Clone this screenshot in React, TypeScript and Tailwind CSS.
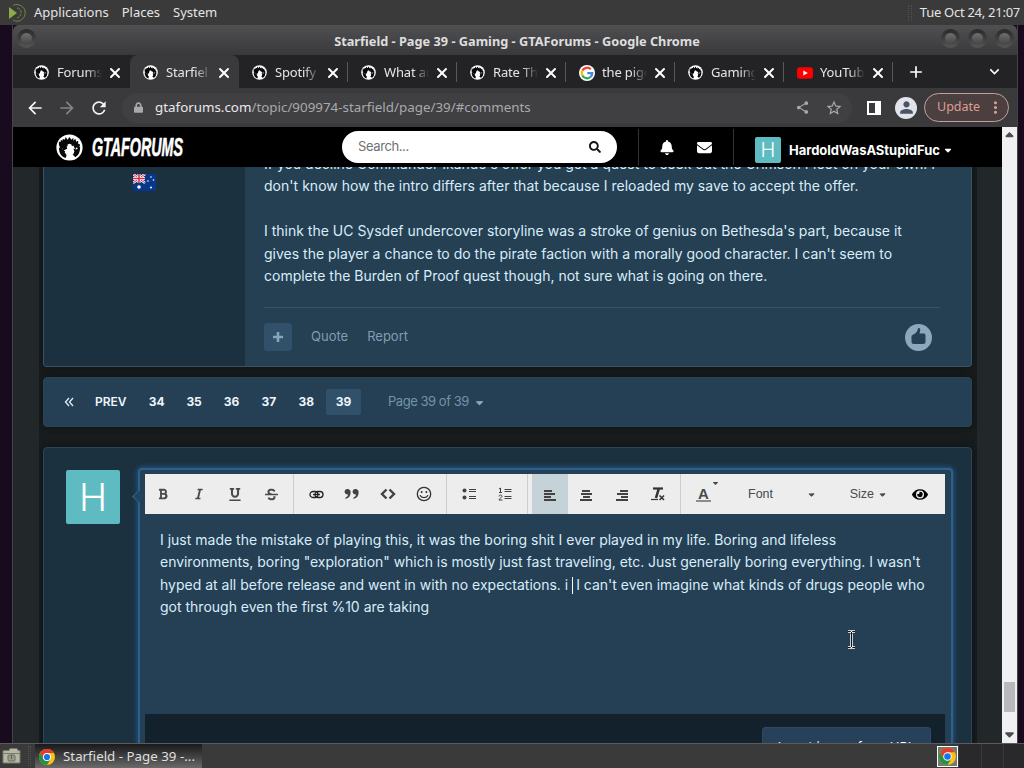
import React from "react";
import { X } from "lucide-react";
import { FaBell, FaBold, FaEye, FaItalic, FaLock, FaSearch, FaStrikethrough, FaUnderline } from "react-icons/fa";
import { FaCaretDown, FaCaretUp, FaEnvelope } from "react-icons/fa6";
import {
  MdArrowBack,
  MdArrowForward,
  MdExpandMore,
  MdAdd,
  MdMoreVert,
  MdPerson,
  MdRefresh,
  MdShare,
  MdStarBorder,
} from "react-icons/md";

interface TabData {
  title: string;
  icon: "gta" | "google" | "youtube";
  active?: boolean;
  divider?: boolean;
}

const tabs: TabData[] = [
  { title: "Forums", icon: "gta" },
  { title: "Starfiel", icon: "gta", active: true },
  { title: "Spotify t", icon: "gta", divider: true },
  { title: "What ar", icon: "gta", divider: true },
  { title: "Rate Th", icon: "gta", divider: true },
  { title: "the pige", icon: "google", divider: true },
  { title: "Gaming", icon: "gta", divider: true },
  { title: "YouTub", icon: "youtube", divider: true },
];

const postLines = [
  "If you decline Commander Ikande's offer you get a quest to seek out the Crimson Fleet on your own. I",
  "don't know how the intro differs after that because I reloaded my save to accept the offer.",
  "",
  "I think the UC Sysdef undercover storyline was a stroke of genius on Bethesda's part, because it",
  "gives the player a chance to do the pirate faction with a morally good character. I can't seem to",
  "complete the Burden of Proof quest though, not sure what is going on there.",
];

const pages = ["34", "35", "36", "37", "38", "39"];

const GtaMark = ({ size }: { size: number }) => (
  <svg width={size} height={size} viewBox="0 0 28 28" className="shrink-0">
    <circle cx="14" cy="14" r="13.6" fill="#fff" />
    <path
      d="M3 11V8h2V6l2 1V5l2 1 1-3 2 3 2-3 2 3 2-2v3l2-2 1 3 2-1v3l2 1-1 4-3-1-1 2-2-4-2 1-2-1-3 1 1 3-2 1-3-2-2 3-1-4z"
      fill="#08090a"
    />
    <path
      d="M3 14l3 2 4-2 1 2-2 3 2 3-1 3c-4-1-7-5-7-11zM18 15l3 1 4-3c0 5-1 9-5 11l-3-3 2-3z"
      fill="#08090a"
    />
    <path d="M12 11l2-1 2 1 1 3-2 1 4 3-1 3-3 1-4-3-3-2 4-2z" fill="#fff" />
  </svg>
);

const GoogleMark = () => (
  <svg width="16" height="16" viewBox="0 0 16 16" className="shrink-0">
    <circle cx="8" cy="8" r="8" fill="#fff" />
    <g fill="none" strokeWidth="2.3">
      <path d="M11.8 4.3A5.2 5.2 0 0 0 3.4 5.6" stroke="#ea4335" />
      <path d="M3.4 5.6a5.2 5.2 0 0 0 0 4.9" stroke="#fbbc05" />
      <path d="M3.4 10.5a5.2 5.2 0 0 0 8 1.5" stroke="#34a853" />
      <path d="M11.4 12A5.2 5.2 0 0 0 13.2 8.2H8.3" stroke="#4285f4" />
    </g>
  </svg>
);

const YoutubeMark = () => (
  <svg width="16" height="16" viewBox="0 0 16 16" className="shrink-0">
    <rect y="2.2" width="16" height="11.6" rx="3" fill="#f00" />
    <path d="M6.3 5.4v5.2L10.8 8z" fill="#fff" />
  </svg>
);

const ChromeMark = ({ size }: { size: number }) => (
  <svg width={size} height={size} viewBox="0 0 16 16" className="shrink-0">
    <circle cx="8" cy="8" r="8" fill="#fbc116" />
    <path d="M1.07 4A8 8 0 0 1 14.93 4H8v4L4.5 10z" fill="#e33b2e" />
    <path d="M1.07 4A8 8 0 0 0 8 16l3.5-6L8 8l-3.5 2z" fill="#229342" />
    <circle cx="8" cy="8" r="4" fill="#fff" />
    <circle cx="8" cy="8" r="3.1" fill="#1a73e8" />
  </svg>
);

const WindowButton = () => (
  <span className="w-[19px] h-[19px] rounded-full bg-linear-to-b from-[#292929] to-[#565656] flex items-center justify-center">
    <span className="w-[11px] h-[11px] rounded-full bg-linear-to-b from-[#707070] to-[#464646]" />
  </span>
);

const TopPanel = () => (
  <div className="h-[25px] shrink-0 bg-[#3a3a3b] flex items-center text-[13px] text-[#e4e4e4] pl-[7px] pr-1">
    <svg width="21" height="20" viewBox="0 0 21 20">
      <path d="M2 4l8 6-8 6z" fill="#8dab45" />
      <g fill="none" stroke="#6f8a49">
        <path d="M6 2.500c3-2 8-1 11 3 3 5 0 11-5 12.500-3 .5-4 0-6-1" />
        <path d="M10 5c5 0 6 8 0 10" strokeDasharray="3 1" />
      </g>
    </svg>
    <span className="ml-[6px]">Applications</span>
    <span className="ml-[13px]">Places</span>
    <span className="ml-[13px]">System</span>
    <span className="ml-auto mr-[8px] w-1 h-4 border-x border-dotted border-[#525252]" />
    <span className="tracking-[-0.27px]">Tue Oct 24, 21:07</span>
  </div>
);

const TitleBar = () => (
  <div className="h-[30px] shrink-0 flex items-start pt-[4px] pl-[4px] pr-[3px] rounded-t-md bg-linear-to-b from-[#505052] to-[#39393b]">
    <WindowButton />
    <span className="flex-1 pl-[57px] text-center text-[12.75px] leading-[24px] font-bold text-[#dedede] whitespace-nowrap">
      Starfield - Page 39 - Gaming - GTAForums - Google Chrome
    </span>
    <div className="flex gap-[8px]">
      <WindowButton />
      <WindowButton />
      <WindowButton />
    </div>
  </div>
);

const Tab = ({ tab }: { tab: TabData }) => (
  <div
    className={`w-[109px] h-[33px] shrink-0 flex items-center pt-[2px] pl-[13px] relative ${
      tab.active ? "bg-[#3a3a3c] rounded-t-lg" : ""
    }`}
  >
    {tab.icon === "gta" && <GtaMark size={15} />}
    {tab.icon === "google" && <GoogleMark />}
    {tab.icon === "youtube" && <YoutubeMark />}
    <span
      className={`w-[45px] overflow-hidden whitespace-nowrap text-[13px] tracking-[-0.15px] mask-r-from-65% mask-r-to-100% text-[#e5e5e7] ${
        tab.icon === "gta" ? "ml-[8px]" : "ml-[7px]"
      }`}
    >
      {tab.title}
    </span>
    <X className="ml-[5px] w-[16px] h-[16px] shrink-0 text-white" strokeWidth={3} />
    {tab.divider && <span className="absolute right-0 top-[7px] w-px h-5 bg-[#58585a]" />}
  </div>
);

const BrowserToolbar = () => (
  <div className="h-[39px] shrink-0 bg-[#3a3a3c] flex items-center pl-[12px] pr-[8px] text-[#f3f3f4]">
    <MdArrowBack className="w-5 h-5" />
    <MdArrowForward className="ml-[12px] w-5 h-5 text-[#848487]" />
    <MdRefresh className="ml-[12px] w-5 h-5" />
    <div className="ml-[13px] w-[730px] h-[30px] rounded-full bg-[#404043] flex items-center pl-[12px] pr-[9px] text-[#a9a9ad]">
      <FaLock className="w-[9px] h-[11px]" />
      <span className="ml-[12px] text-[13.36px] whitespace-nowrap">
        <span className="text-[#e9e9ea]">gtaforums.com</span>/topic/909974-starfield/page/39/#comments
      </span>
      <MdShare className="ml-auto w-[15px] h-[15px]" />
      <MdStarBorder className="ml-[15px] w-[18px] h-[18px]" />
    </div>
    <span className="ml-[15px] w-[14px] h-[14px] border-2 border-r-[6px] border-white" />
    <span className="ml-[14px] w-[22px] h-[22px] rounded-full bg-[#e2e4ea] flex items-center justify-center">
      <MdPerson className="w-[19px] h-[19px] text-[#4b5467]" />
    </span>
    <div className="ml-auto w-[85px] h-[29px] rounded-full border border-[#c4a09c] bg-[#4b3f40] text-[#dc9d94] flex items-center pl-[12px] text-[12.5px]">
      Update
      <MdMoreVert className="ml-[6px] w-[19px] h-[19px] shrink-0" />
    </div>
  </div>
);

const SiteHeader = () => (
  <div className="h-10 shrink-0 bg-black flex items-center pl-[43px] text-white">
    <GtaMark size={27} />
    <svg width="93" height="26" viewBox="0 0 93 26" className="ml-[8px]">
      <text
        x="1"
        y="22"
        fill="#fff"
        stroke="#fff"
        strokeWidth="0.6"
        fontFamily="Liberation Sans"
        fontStyle="italic"
        fontWeight="700"
        fontSize="26"
        textLength="91"
        lengthAdjust="spacingAndGlyphs"
      >
        GTAFORUMS
      </text>
    </svg>
    <div className="ml-[158px] w-[275px] h-8 rounded-full bg-white flex items-center pl-4 pr-[16px] text-[13px] tracking-[-0.4px] text-[#707070]">
      Search...
      <FaSearch className="ml-auto w-[12px] h-[12px] text-[#161616]" />
    </div>
    <span className="ml-[21px] w-px h-9 bg-[#333]" />
    <FaBell className="ml-[21px] w-[14px] h-[15px]" />
    <FaEnvelope className="ml-[23px] w-[15px] h-[15px]" />
    <span className="ml-[21px] w-px h-9 bg-[#333]" />
    <span className="ml-[21px] mt-[6px] w-[26px] h-[26px] rounded-[2px] bg-[#5dbbc1] text-[20px] leading-[26px] font-light text-center">
      H
    </span>
    <span className="ml-[8px] mt-[7px] text-[13px] tracking-[-0.03px] font-bold whitespace-nowrap">
      HardoldWasAStupidFuc
    </span>
    <FaCaretDown className="ml-[4px] mt-[6px] w-[8px] h-[10px]" />
  </div>
);

const AustraliaFlag = () => (
  <svg width="23" height="17" viewBox="0 0 23 17" className="mt-[7px] ml-[89px]">
    <rect width="23" height="17" rx="1" fill="#07378b" />
    <path d="M0 0l12 9M12 0L0 9" stroke="#fff" strokeWidth="2.5" />
    <path d="M0 0l12 9M12 0L0 9" stroke="#d42d45" />
    <path d="M6 0v9M0 4.500h12" stroke="#fff" strokeWidth="3" />
    <path d="M6 0v9M0 4.500h12" stroke="#d42d45" strokeWidth="1.6" />
    <circle cx="6" cy="13" r="1.8" fill="#fff" />
    <circle cx="18" cy="3" r=".8" fill="#fff" />
    <circle cx="15" cy="7" r=".8" fill="#fff" />
    <circle cx="20.500" cy="6" r=".8" fill="#fff" />
    <circle cx="18" cy="13.500" r="1" fill="#fff" />
  </svg>
);

const Post = () => (
  <div className="h-[200px] shrink-0 flex border border-t-0 border-[#3a5262] rounded-b overflow-hidden bg-[#253f53] shadow-[0_0_6px_#0c1216]">
    <div className="w-[201px] shrink-0 bg-[#1c313f]">
      <AustraliaFlag />
    </div>
    <div className="flex-1 pl-[19px] pr-[31px]">
      <div className="mt-[-14px] h-[153px] text-[14px] leading-[22.4px] text-[#d8edf9] whitespace-nowrap">
        {postLines.map((line, i) => (
          <div key={i} className={`h-[22.4px] ${i === 1 ? "tracking-[0.03px]" : ""}`}>
            {line}
          </div>
        ))}
      </div>
      <div className="mt-[1px] border-t border-[#395267] pt-[15px] flex items-center text-[13px] text-[#7f9eb3]">
        <span className="w-[28px] h-[28px] rounded-[3px] bg-[#305169] flex items-center justify-center">
          <svg width="10" height="10" viewBox="0 0 10 10" stroke="#86a6ba" strokeWidth="2.6">
            <path d="M5 0v10M0 5h10" />
          </svg>
        </span>
        <span className="ml-[19px]">Quote</span>
        <span className="ml-[19px]">Report</span>
        <span className="ml-auto mr-[8px] w-[27px] h-[27px] rounded-full bg-[#8ca8bd] flex items-center justify-center">
          <svg width="17" height="18" viewBox="0 0 17 18" className="mt-[-3px]">
            <path
              d="M1.500 9.500c0-1 .5-1.500 1.500-1.800C6 6.500 7.500 4.500 7.800 2.300c.2-1.300 1-1.500 1.800-1 1.200.8.6 3-.1 5.200h4c1.300 0 2 .7 2 1.600v7c0 1.200-1 1.900-2.300 1.900H4c-1.500 0-2.500-.8-2.500-2z"
              fill="#263f53"
            />
          </svg>
        </span>
      </div>
    </div>
  </div>
);

const Pagination = () => (
  <div className="mt-[10px] h-[50px] shrink-0 rounded border border-[#2b4453] bg-[#253f54] flex items-center pl-[20px] text-[12px] font-bold text-[#edf6fc] shadow-[0_0_6px_#0c1216]">
    <svg width="10" height="10" viewBox="0 0 10 10" fill="none" stroke="#d9e8f2" strokeWidth="1.400">
      <path d="M5 1L1.500 5 5 9M9 1L5.500 5 9 9" />
    </svg>
    <span className="ml-[21px] w-[43px] font-semibold">PREV</span>
    {pages.map((page) => (
      <span
        key={page}
        className={`h-[26px] flex items-center justify-center rounded-[2px] ${
          page === "39" ? "w-[35px] ml-[1px] bg-[#305169]" : "w-[37.400px]"
        }`}
      >
        {page}
      </span>
    ))}
    <span className="ml-[27px] text-[13px] tracking-[-0.46px] font-normal text-[#7393a8]">Page 39 of 39</span>
    <FaCaretDown className="ml-[6px] w-[9px] h-[11px] text-[#8ba8ba]" />
  </div>
);

const ToolButton = ({ children, active }: { children: React.ReactNode; active?: boolean }) => (
  <span className={`w-9 h-10 flex items-center justify-center ${active ? "bg-[#c5d2d8]" : ""}`}>{children}</span>
);

const LinkIcon = () => (
  <svg width="15" height="9" viewBox="0 0 15 9" fill="none" stroke="#222" strokeWidth="1.300">
    <rect x="1" y="1.500" width="8" height="6" rx="3" />
    <rect x="6" y="1.500" width="8" height="6" rx="3" />
    <path d="M4 4.500h7" />
  </svg>
);

const QuoteIcon = () => (
  <svg width="16" height="12" viewBox="0 0 16 12" fill="#424242">
    <path d="M3.500 1A2.700 2.700 0 1 0 4 6.300C4 8 3 9 1.500 9.500V11C5 10.300 6.600 7.800 6.600 4.300A3 3 0 0 0 3.500 1z" />
    <path d="M11.500 1A2.700 2.700 0 1 0 12 6.300c0 1.700-1 2.700-2.500 3.200V11c3.500-.7 5.100-3.200 5.100-6.700A3 3 0 0 0 11.500 1z" />
  </svg>
);

const CodeIcon = () => (
  <svg width="16" height="12" viewBox="0 0 16 12" fill="none" stroke="#424242" strokeWidth="2.400">
    <path d="M6.500 1.500L2 6l4.500 4.500M9.500 1.500L14 6l-4.500 4.500" />
  </svg>
);

const SmileIcon = () => (
  <svg width="16" height="16" viewBox="0 0 16 16" fill="none" stroke="#333" strokeWidth="1.300">
    <circle cx="8" cy="8" r="6.700" />
    <circle cx="5.600" cy="6" r="1" fill="#333" stroke="none" />
    <circle cx="10.400" cy="6" r="1" fill="#333" stroke="none" />
    <path d="M4 9.300c1.500 3 6.500 3 8 0" />
  </svg>
);

const BulletsIcon = () => (
  <svg width="14" height="14" viewBox="0 0 14 14" stroke="#424242">
    <circle cx="2.500" cy="3.500" r="2" fill="#424242" stroke="none" />
    <circle cx="2.500" cy="10.500" r="2" fill="#424242" stroke="none" />
    <path d="M7 2.500h7M7 4.500h7M7 9.500h7M7 11.500h7" />
  </svg>
);

const NumbersIcon = () => (
  <svg width="14" height="14" viewBox="0 0 14 14" stroke="#424242" fill="none">
    <path d="M1 2l1.500-1v5M1 5.500h3M1 9.500c0-2 3-2 3 0 0 1-3 2-3 3.500h3.500M6.500 2.500h7M6.500 4.500h7M6.500 9.500h7M6.500 11.500h7" />
  </svg>
);

const AlignIcon = ({ align }: { align: "left" | "center" | "right" }) => {
  const items = align === "center" ? "items-center" : align === "right" ? "items-end" : "items-start";
  return (
    <span className={`w-[12px] mt-[2px] flex flex-col gap-px ${items}`}>
      <i className="w-[8px] h-[2px] bg-[#424242]" />
      <i className="w-[11px] h-[2px] bg-[#424242]" />
      <i className="w-[7px] h-[2px] bg-[#424242]" />
      <i className="w-[12px] h-[2px] bg-[#424242]" />
    </span>
  );
};

const Divider = ({ className = "" }: { className?: string }) => (
  <span className={`w-px h-10 bg-[#c9ced1] ${className}`} />
);

const EditorToolbar = () => (
  <div className="h-10 bg-[#ededee] flex items-center font-['Liberation_Sans',sans-serif] text-[12px] text-[#4a4a4a]">
    <ToolButton>
      <FaBold className="w-[10px] h-[12px]" />
    </ToolButton>
    <ToolButton>
      <FaItalic className="w-[10px] h-[12px]" />
    </ToolButton>
    <ToolButton>
      <FaUnderline className="w-[12px] h-[13px]" />
    </ToolButton>
    <ToolButton>
      <FaStrikethrough className="w-[13px] h-[13px]" />
    </ToolButton>
    <Divider className="ml-1 mr-[4px]" />
    <ToolButton>
      <LinkIcon />
    </ToolButton>
    <ToolButton>
      <QuoteIcon />
    </ToolButton>
    <ToolButton>
      <CodeIcon />
    </ToolButton>
    <ToolButton>
      <SmileIcon />
    </ToolButton>
    <Divider className="ml-[4px] mr-[4px]" />
    <ToolButton>
      <BulletsIcon />
    </ToolButton>
    <ToolButton>
      <NumbersIcon />
    </ToolButton>
    <Divider className="ml-[4px] mr-[4px]" />
    <ToolButton active>
      <AlignIcon align="left" />
    </ToolButton>
    <ToolButton>
      <AlignIcon align="center" />
    </ToolButton>
    <ToolButton>
      <AlignIcon align="right" />
    </ToolButton>
    <ToolButton>
      <svg width="16" height="16" viewBox="0 0 16 16" fill="none" stroke="#333">
        <path d="M3 2.500h10" strokeWidth="2.200" />
        <path d="M8.700 3L6 12" strokeWidth="2.600" />
        <path d="M1 13.500h7" strokeWidth="1.200" />
        <path d="M9.500 9.500l4.500 4.500M14 9.500L9.500 14" strokeWidth="1.600" />
      </svg>
    </ToolButton>
    <Divider className="ml-[4px]" />
    <span className="ml-[15px] w-[15px] h-[16px] border-b-2 border-[#8c8c8c] text-center text-[15px] leading-[15px] font-bold">
      A
    </span>
    <FaCaretDown className="w-[7px] h-[8px] ml-px mb-[22px]" />
    <span className="ml-[29px] text-[12.500px]">Font</span>
    <FaCaretDown className="ml-auto w-[7px] h-[9px]" />
    <span className="ml-[35px] text-[12.500px]">Size</span>
    <FaCaretDown className="ml-[5px] w-[7px] h-[9px]" />
    <FaEye className="ml-[26px] mr-[17px] w-[16px] h-[15px] text-black" />
  </div>
);

const Reply = () => (
  <div className="mt-[20px] h-[320px] shrink-0 flex rounded-t border border-[#2c4858] bg-[#1c313f] pl-[22px] pt-[22px] shadow-[0_0_6px_#0c1216]">
    <span className="w-[54px] h-[54px] shrink-0 rounded-[2px] bg-[#5dbbc1] text-white text-[38px] font-light flex items-center justify-center">
      H
    </span>
    <div className="ml-[18px] mt-[-2px] w-[815px] h-[320px] shrink-0 relative rounded border-2 border-[#2c608d] bg-[#253f54] shadow-[0_0_5px_1px_#235584] pl-[5px] pr-[6px] pt-[4px]">
      <span className="absolute left-[-6px] top-[22px] w-[9px] h-[9px] rotate-45 border-l border-b border-[#2d628d] bg-[#24435d]" />
      <EditorToolbar />
      <div className="h-[200px] pt-[15px] pl-[15px] text-[14px] leading-[22.4px] text-[#d8edf9] whitespace-nowrap relative">
        <p>I just made the mistake of playing this, it was the boring shit I ever played in my life. Boring and lifeless</p>
        <p className="tracking-[-0.03px]">
          environments, boring "exploration" which is mostly just fast traveling, etc. Just generally boring everything. I wasn't
        </p>
        <p>
          hyped at all before release and went in with no expectations. i{" "}
          <span className="inline-block w-px h-[17px] mr-[3px] align-middle bg-white" />I can't even imagine what kinds of drugs
          people who
        </p>
        <p>got through even the first %10 are taking</p>
        <svg width="9" height="19" viewBox="0 0 9 19" fill="none" className="absolute left-[702px] top-[116px]">
          <path d="M1 1.500h2.500l1 1 1-1H8M4.500 2v15M1 17.500h2.500l1-1 1 1H8" stroke="#fff" strokeWidth="2.500" />
          <path d="M1 1.500h2.500l1 1 1-1H8M4.500 2v15M1 17.500h2.500l1-1 1 1H8" stroke="#111" />
        </svg>
      </div>
      <div className="h-[60px] bg-[#12212b] pt-[13px] pr-[14px] flex justify-end">
        <span className="w-[169px] h-[36px] rounded-[3px] border border-[#31495a] bg-[#264159] pt-[9px] text-center text-[13px] leading-[20px] text-white">
          Insert image from URL
        </span>
      </div>
    </div>
  </div>
);

const Scrollbar = () => (
  <div className="w-[15px] py-[2px] shrink-0 bg-[#f0f0f2] flex flex-col items-center">
    <FaCaretUp className="w-[9px] h-[13px] text-[#4c4c4c]" />
    <span className="mt-auto mb-[15px] w-[11px] h-[30px] bg-[#b9b9bd]" />
    <FaCaretDown className="w-[9px] h-[14px] text-[#4c4c4c]" />
  </div>
);

const Taskbar = () => (
  <div className="h-[25px] shrink-0 bg-[#3a3a3b] border-t border-[#5b5b5c] flex items-center text-[13.33px] text-[#dfdfdf]">
    <svg width="20" height="18" viewBox="0 0 20 18" className="ml-[2px]">
      <path d="M1 3.500h6l1-2h7l1 2h2V16H1z" fill="#b6b8a5" stroke="#74766b" />
      <path d="M1.500 6.500h16" stroke="#777a6b" />
      <rect x="6" y="8" width="7" height="6" rx="1" fill="#989b87" stroke="#6c7063" />
      <path d="M9.500 8v4" stroke="#5c6056" />
    </svg>
    <span className="ml-[6px] w-[3px] h-5 border-x border-dotted border-[#525252]" />
    <div className="ml-[4px] w-[167px] h-[24px] bg-linear-to-b from-[#1a1a1b] to-[#6a6a6b] flex items-center pt-px pl-[4px] whitespace-nowrap">
      <ChromeMark size={16} />
      <span className="ml-[8px]">Starfield - Page 39 -...</span>
    </div>
    <span className="ml-auto w-[21px] h-[21px] border border-white bg-[#74796f] flex items-center justify-center">
      <ChromeMark size={17} />
    </span>
    <span className="ml-[1px] w-[22px] h-[24px] bg-[#29292b]" />
    <span className="ml-px w-[21px] h-[24px] bg-[#29292b]" />
    <span className="ml-px w-[20px] h-[24px] bg-[#29292b]" />
  </div>
);

const App: React.FC = () => {
  return (
    <div className="w-[1024px] h-[768px] overflow-hidden flex flex-col bg-[#190b1e] font-['Noto_Sans',sans-serif]">
      <TopPanel />
      <div className="h-[718px] ml-[12px] mr-[6px] border-x border-[#454347] flex flex-col overflow-hidden">
        <TitleBar />
        <div className="h-[33px] shrink-0 bg-[#232325] flex items-center pl-[8px] text-white">
          {tabs.map((tab, i) => (
            <Tab key={i} tab={tab} />
          ))}
          <MdAdd className="ml-[13px] w-[20px] h-[20px]" />
          <MdExpandMore className="ml-auto mr-[13px] w-[19px] h-[19px]" />
        </div>
        <BrowserToolbar />
        <div className="flex-1 min-h-0 flex font-['Inter',sans-serif]">
          <div className="flex-1 min-w-0 flex flex-col bg-[#222829]">
            <SiteHeader />
            <div className="flex-1 min-h-0 overflow-hidden ml-[26px] mr-[25px] px-[4px] pr-[5px] bg-[#181c1d] flex flex-col">
              <Post />
              <Pagination />
              <Reply />
            </div>
          </div>
          <Scrollbar />
        </div>
      </div>
      <Taskbar />
    </div>
  );
};

export default App;
